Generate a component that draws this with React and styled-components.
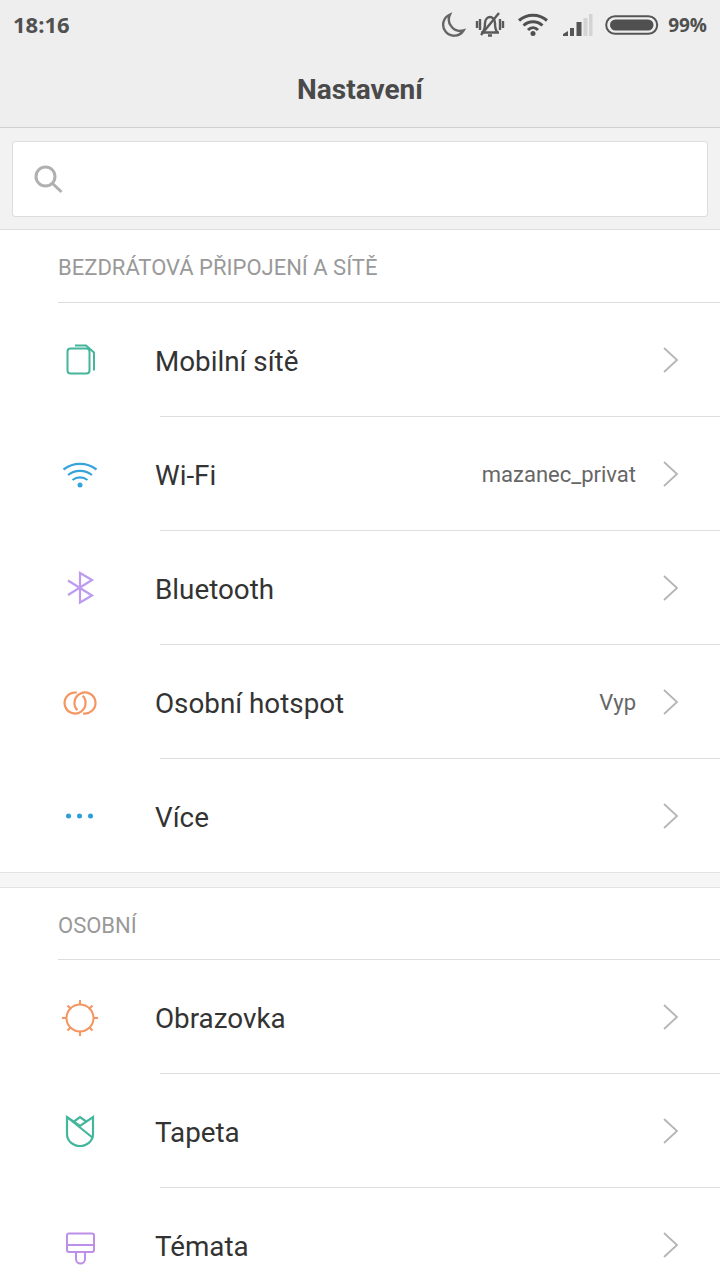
import React from "react";
import styled, { createGlobalStyle } from "styled-components";

const Global = createGlobalStyle`
  html, body { margin: 0; padding: 0; background: #fff; height: 1280px; overflow: hidden; }
  * { box-sizing: border-box; }
`;

const Page = styled.div`
  width: 720px;
  height: 1280px;
  overflow: hidden;
  font-family: Roboto, sans-serif;
  background: #fff;
`;
const Top = styled.header`
  height: 128px;
  background: #eeeeee;
  border-bottom: 1px solid #cfcfcf;
`;
const StatusBar = styled.div`
  height: 50px;
  display: flex;
  align-items: center;
  justify-content: space-between;
  padding: 0 13px 0 13px;
  color: #505050;
  font-family: "Open Sans", sans-serif;
  font-weight: 700;
`;
const Time = styled.span`
  font-size: 22px;
  line-height: 48px;
  height: 50px;
`;
const StatusIcons = styled.div`
  display: flex;
  align-items: center;
  height: 50px;
  gap: 12px;
`;
const Percent = styled.span`
  font-size: 19px;
  margin-left: -3px;
`;
const Title = styled.h1`
  margin: 0;
  height: 77px;
  line-height: 80px;
  text-align: center;
  font-size: 28px;
  font-weight: 700;
  color: #4a4a4a;
`;
const SearchArea = styled.div`
  height: 102px;
  background: #f2f2f2;
  border-bottom: 1px solid #dedede;
  padding: 13px 12px 0;
`;
const SearchBox = styled.div`
  height: 76px;
  background: #fff;
  border: 1px solid #dcdcdc;
  border-radius: 3px;
  display: flex;
  align-items: center;
  padding-left: 21px;
`;
const SectionHead = styled.div`
  height: ${p => (p.$tall ? "72px" : "73px")};
  margin-left: 58px;
  border-bottom: 1px solid #dddddd;
  font-size: 22px;
  line-height: ${p => (p.$tall ? "76px" : "75px")};
  color: #999999;
`;
const Label = styled.span`
  flex: 1;
  font-size: 27.8px;
  line-height: 36px;
  padding-top: 3px;
  color: #333333;
`;
const Row = styled.div`
  height: 114px;
  display: flex;
  align-items: center;
  position: relative;
  &:not(:last-child)::after {
    content: "";
    position: absolute;
    left: 160px;
    right: 0;
    bottom: 0;
    height: 1px;
    background: #dddddd;
  }
`;
const Rows = styled.div`
  ${p => (p.$trim ? `& > ${Row}:last-child { height: 113px; } & > ${Row}:last-child ${Label} { padding-top: 4px; }` : "")}
`;
const IconSlot = styled.div`
  width: 155px;
  padding-left: 58px;
  display: flex;
  align-items: center;
`;
const Value = styled.span`
  font-size: 22px;
  line-height: 28px;
  padding-top: 1px;
  color: #666666;
  margin-right: 25px;
`;
const Chevron = styled.svg`
  width: 18px;
  height: 28px;
  margin-right: 41px;
  fill: none;
  stroke: #b5b5b5;
  stroke-width: 1.8;
`;
const Gap = styled.div`
  height: 16px;
  background: #f6f6f6;
  border-top: 1px solid #e4e4e4;
  border-bottom: 1px solid #e4e4e4;
`;

const Ico = ({ children, stroke }) => (
  <svg width="44" height="44" viewBox="0 0 44 44" fill="none" stroke={stroke} strokeWidth="2">{children}</svg>
);

const SIM = () => (
  <Ico stroke="#44b69c">
    <rect x="9.500" y="10.500" width="22" height="25" rx="3" />
    <path d="M17 7.500h11l8 7v18" />
  </Ico>
);
const Wifi = () => (
  <Ico stroke="#36a3da">
    <path strokeWidth="2.200" d="M5.500 17.500c10-7.500 23-7.500 33 0M10 23c7-5.500 17-5.500 24 0M14.500 28c4.500-3.500 10.500-3.500 15 0" />
    <circle cx="22" cy="33" r="2.500" fill="#36a3da" stroke="none" />
  </Ico>
);
const Bt = () => (
  <Ico stroke="#bd9bf0">
    <path strokeWidth="2.200" d="M10 14.500l24 15L22 36.500V7l12 7-24 15" />
  </Ico>
);
const Hotspot = () => (
  <Ico stroke="#f59560">
    <path strokeWidth="2.200" d="M24.700 15.800A10.500 10.500 0 1 1 18.800 12.660" />
    <path strokeWidth="2.200" d="M19.320 30.160A10.500 10.500 0 1 1 25.180 33.340" />
  </Ico>
);
const More = () => (
  <Ico stroke="none">
    <circle cx="10.500" cy="22" r="2.500" fill="#2b9fdc" />
    <circle cx="21.500" cy="22" r="2.500" fill="#2b9fdc" />
    <circle cx="32.500" cy="22" r="2.500" fill="#2b9fdc" />
  </Ico>
);
const Sun = () => (
  <Ico stroke="#f59560">
    <circle cx="22" cy="23" r="13.500" />
    <path d="M22 5v5M22 36v5M4 23h5M35 23h5M9.500 10.500l3.500 3.500M31 32l3.500 3.500M34.500 10.500L31 14M13 32l-3.500 3.500" />
  </Ico>
);
const Tulip = () => (
  <Ico stroke="#44b69c">
    <path strokeWidth="2.200" d="M9 8v17c0 7 6 12 13 12s13-5 13-12V8l-13 9z" />
    <path strokeWidth="2.200" d="M9 8l26 21M16 12.500L22 8l7 5" />
  </Ico>
);
const Brush = () => (
  <Ico stroke="#bd8fe8">
    <path d="M11 10.500h23a2 2 0 0 1 2 2V27a2 2 0 0 1-2 2H11a2 2 0 0 1-2-2V12.500a2 2 0 0 1 2-2zM9 22h27M18 29v7a4.500 4.500 0 0 0 9 0v-7" />
  </Ico>
);

const Item = ({ icon, label, value }) => (
  <Row>
    <IconSlot>{icon}</IconSlot>
    <Label>{label}</Label>
    {value && <Value>{value}</Value>}
    <Chevron viewBox="0 0 18 28"><path d="M3 2l13 12L3 26" /></Chevron>
  </Row>
);

export default function App() {
  return (
    <Page>
      <Global />
      <Top>
        <StatusBar>
          <Time>18:16</Time>
          <StatusIcons>
            <svg style={{ marginRight: -3 }} width="26" height="26" viewBox="0 0 26 26" fill="none" stroke="#666" strokeWidth="2.400">
              <path d="M10 2.500a11 11 0 1 0 13.500 16A11.500 11.500 0 0 1 10 2.500z" />
            </svg>
            <svg width="30" height="28" viewBox="0 0 30 28" fill="none" stroke="#5a5a5a" strokeWidth="2.400">
              <path d="M6 21.500h18M8 21c2-3 2-6 2-9 0-4 3-6 5-6s5 2 5 6c0 3 0 6 2 9M13 24.500h4" />
              <path d="M24 2L6 24" />
              <path d="M2 10v7M5 8v11M25 8v11M28 10v7" />
            </svg>
            <svg width="32" height="26" viewBox="0 0 32 26" fill="none" stroke="#505050" strokeWidth="3">
              <path d="M2 8.500c8-7 20-7 28 0M6.500 13.500c5.500-5 13.500-5 19 0M11 18c3-3 7-3 10 0" />
              <circle cx="16" cy="21.500" r="2.500" fill="#505050" stroke="none" />
            </svg>
            <svg width="32" height="24" viewBox="0 0 32 24">
              <path d="M2 21l5-3v5H2z" fill="#555" />
              <rect x="9" y="15" width="4" height="8" fill="#555" />
              <rect x="15.500" y="9" width="5" height="14" fill="#555" />
              <rect x="22.500" y="5" width="4" height="18" fill="#d4d4d4" />
              <rect x="28" y="1" width="3.500" height="22" fill="#d4d4d4" />
            </svg>
            <svg width="54" height="22" viewBox="0 0 54 22" fill="none">
              <rect x="1.200" y="2.200" width="51" height="17.600" rx="8.800" stroke="#555" strokeWidth="2" />
              <rect x="5" y="5.500" width="43.500" height="11" rx="5.500" fill="#505050" />
            </svg>
            <Percent>99%</Percent>
          </StatusIcons>
        </StatusBar>
        <Title>Nastavení</Title>
      </Top>
      <SearchArea>
        <SearchBox>
          <svg width="30" height="30" viewBox="0 0 30 30" fill="none" stroke="#b0b0b0" strokeWidth="3">
            <circle cx="11.500" cy="12.500" r="9.500" />
            <path d="M18.500 19.500l9 8.500" />
          </svg>
        </SearchBox>
      </SearchArea>
      <SectionHead>BEZDRÁTOVÁ PŘIPOJENÍ A SÍTĚ</SectionHead>
      <Rows $trim>
        <Item icon={<SIM />} label="Mobilní sítě" />
        <Item icon={<Wifi />} label="Wi-Fi" value="mazanec_privat" />
        <Item icon={<Bt />} label="Bluetooth" />
        <Item icon={<Hotspot />} label="Osobní hotspot" value="Vyp" />
        <Item icon={<More />} label="Více" />
      </Rows>
      <Gap />
      <SectionHead $tall>OSOBNÍ</SectionHead>
      <Rows>
        <Item icon={<Sun />} label="Obrazovka" />
        <Item icon={<Tulip />} label="Tapeta" />
        <Item icon={<Brush />} label="Témata" />
      </Rows>
    </Page>
  );
}
